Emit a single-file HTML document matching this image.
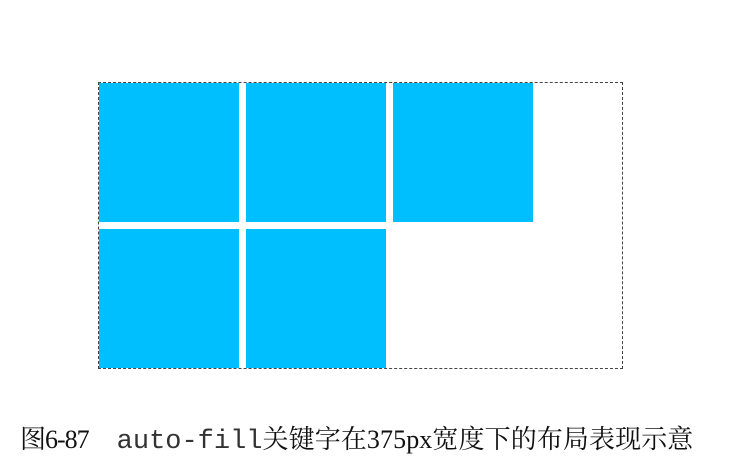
<!DOCTYPE html>
<html><head><meta charset="utf-8"><style>
body{margin:0;width:745px;height:468px;background:#fff;position:relative;overflow:hidden}
.box{position:absolute;left:98px;top:82px;width:523px;height:285px;border:1px dashed #444}
.t{position:absolute;background:#00bfff;width:140px}
.cap{position:absolute;left:20px;top:419px;font-family:"Liberation Serif","Noto Serif CJK SC",serif;font-size:26px;color:#111;white-space:nowrap;letter-spacing:0.1px}
.m{font-family:"Liberation Mono",monospace;font-size:27px;letter-spacing:0;margin-left:28px;color:#333}
</style></head><body>
<div class="box"></div>
<div class="t" style="left:99px;top:83px;height:139px"></div>
<div class="t" style="left:246px;top:83px;height:139px"></div>
<div class="t" style="left:393px;top:83px;height:139px"></div>
<div class="t" style="left:99px;top:229px;height:139px"></div>
<div class="t" style="left:246px;top:229px;height:139px"></div>
<div class="cap"><span style="letter-spacing:-1px">图6-87</span><span class="m">auto-fill</span>关键字在375px宽度下的布局表现示意</div>
</body></html>
